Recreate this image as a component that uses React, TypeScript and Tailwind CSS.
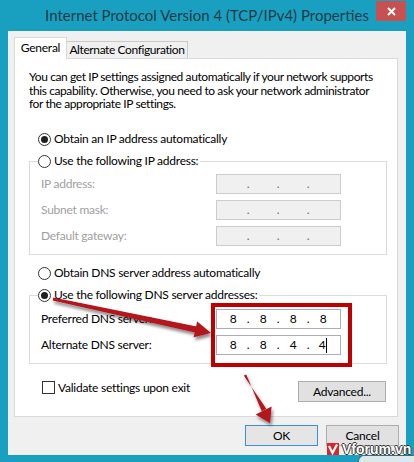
import React from "react";

const Radio = ({ checked }: { checked?: boolean }) => (
    <span className="w-[13px] h-[13px] rounded-full border border-[#333333] bg-white flex items-center justify-center shrink-0">
        {checked && <span className="w-[7px] h-[7px] rounded-full bg-[#1f1f1f]" />}
    </span>
);

const IpBox = ({ values, disabled, cursor }: { values: string[]; disabled?: boolean; cursor?: boolean }) => (
    <div
        className={
            disabled
                ? "w-[125px] h-[20px] border border-[#cccccc] bg-[#f0f0f0] flex items-center pl-[3px] text-[#6d6d6d]"
                : "w-[125px] h-[20px] border border-[#abadb3] bg-white flex items-center pl-[3px] text-black"
        }
    >
        {values.map((v, i) => (
            <React.Fragment key={i}>
                <span className="w-[26px] flex justify-center items-center">
                    {v}
                    {cursor && i === 3 && <span className="w-px h-[15px] bg-black ml-[1px]" />}
                </span>
                {i < 3 && <span className="w-[4px] flex justify-center">.</span>}
            </React.Fragment>
        ))}
    </div>
);

const Row = ({ label, children, disabled }: { label: string; children: React.ReactNode; disabled?: boolean }) => (
    <div className="flex items-center h-[20px]">
        <span className={disabled ? "w-[175px] text-[#a0a0a0]" : "w-[175px] text-black"}>{label}</span>
        {children}
    </div>
);

export default function App() {
    return (
        <div className="relative w-[414px] h-[462px] bg-[#19a0c1] overflow-hidden font-['Lato',sans-serif] text-[12px] leading-[16px] tracking-[-0.25px] text-black whitespace-nowrap">
            {/* title bar */}
            <div className="relative h-[31px] flex items-center justify-center">
                <span className="text-[15px] tracking-normal text-[#1f3b45] leading-[20px] -mt-[1px]">
                    Internet Protocol Version 4 (TCP/IPv4) Properties
                </span>
                <div className="absolute top-[1px] right-[8px] w-[30px] h-[20px] bg-[#c75050] flex items-center justify-center">
                    <svg width="9" height="9" viewBox="0 0 9 9">
                        <path d="M1 1 L8 8 M8 1 L1 8" stroke="white" strokeWidth="2" />
                    </svg>
                </div>
            </div>

            {/* client area */}
            <div className="ml-[8px] w-[398px] h-[424px] bg-[#f0f0f0] flex flex-col pl-[6px] pr-[7px] pt-[6px]">
                {/* tabs */}
                <div className="flex items-end h-[22px] -mb-px relative z-10">
                    <div className="h-[22px] w-[53px] bg-white border-t border-x border-[#d9d9d9] flex items-center justify-center pb-[1px]">
                        General
                    </div>
                    <div className="h-[17px] w-[121px] mb-px bg-[#f0f0f0] border-t border-r border-[#c9c9c9] flex items-center justify-center tracking-[-0.4px]">
                        Alternate Configuration
                    </div>
                </div>

                {/* panel */}
                <div className="w-[384px] h-[359px] bg-white border border-[#d9d9d9] flex flex-col pl-[14px] pr-[10px] pt-[11px]">
                    <p className="leading-[13.5px] tracking-[-0.4px]">
                        You can get IP settings assigned automatically if your network supports
                        <br />
                        this capability. Otherwise, you need to ask your network administrator
                        <br />
                        for the appropriate IP settings.
                    </p>

                    <div className="mt-[20.5px] h-[16px] flex items-center gap-[3px] ml-[9px]">
                        <Radio checked />
                        <span>Obtain an IP address automatically</span>
                    </div>

                    <fieldset className="mt-[6px] w-[358px] border border-[#dcdcdc] pl-[8px] pb-[8px]">
                        <legend className="h-[16px] flex items-center gap-[3px] pr-[2px]">
                            <Radio />
                            <span>Use the following IP address:</span>
                        </legend>
                        <div className="flex flex-col gap-[6px] mt-[5px] pl-[3px]">
                            <Row label="IP address:" disabled>
                                <IpBox values={["", "", "", ""]} disabled />
                            </Row>
                            <Row label="Subnet mask:" disabled>
                                <IpBox values={["", "", "", ""]} disabled />
                            </Row>
                            <Row label="Default gateway:" disabled>
                                <IpBox values={["", "", "", ""]} disabled />
                            </Row>
                        </div>
                    </fieldset>

                    <div className="mt-[10px] h-[16px] flex items-center gap-[3px] ml-[9px]">
                        <Radio />
                        <span>Obtain DNS server address automatically</span>
                    </div>

                    <fieldset className="mt-[6px] w-[358px] border border-[#dcdcdc] pl-[8px] pb-[8px]">
                        <legend className="h-[16px] flex items-center gap-[3px] pr-[2px]">
                            <Radio checked />
                            <span>Use the following DNS server addresses:</span>
                        </legend>
                        <div className="flex flex-col gap-[6px] mt-[6px] pl-[3px]">
                            <Row label="Preferred DNS server:">
                                <IpBox values={["8", "8", "8", "8"]} />
                            </Row>
                            <Row label="Alternate DNS server:">
                                <IpBox values={["8", "8", "4", "4"]} cursor />
                            </Row>
                        </div>
                    </fieldset>

                    <div className="mt-[17px] flex items-start">
                        <div className="ml-[13px] flex items-center gap-[3px] h-[13px]">
                            <span className="w-[13px] h-[13px] border border-[#333333] bg-white" />
                            <span>Validate settings upon exit</span>
                        </div>
                        <button className="ml-auto mr-[1px] w-[88px] h-[21px] bg-[#e1e1e1] border border-[#adadad] flex items-center justify-center">
                            Advanced...
                        </button>
                    </div>
                </div>

                {/* dialog buttons */}
                <div className="mt-[8px] flex justify-end gap-[8px]">
                    <button className="w-[73px] h-[21px] bg-[#e5e5e5] border border-[#3c8fd8] flex items-center justify-center">
                        OK
                    </button>
                    <button className="w-[73px] h-[21px] bg-[#e1e1e1] border border-[#adadad] flex items-center justify-center">
                        Cancel
                    </button>
                </div>
            </div>

            {/* annotation: red frame round the DNS boxes */}
            <div className="absolute left-[211px] top-[303px] w-[141px] h-[64px] border-[4px] border-[#c00000]" />

            {/* annotation arrows */}
            <svg className="absolute inset-0 pointer-events-none" width="414" height="462" viewBox="0 0 414 462">
                <defs>
                    <filter id="sh" x="-20%" y="-20%" width="140%" height="140%">
                        <feDropShadow dx="1.5" dy="3" stdDeviation="1.5" floodColor="#000" floodOpacity="0.45" />
                    </filter>
                </defs>
                <g filter="url(#sh)" fill="#b5121b">
                    <polygon points="53.3,297.5 196.7,326.6 195.3,332.4 52.7,300.5" />
                    <polygon points="211,333 197.2,321.6 193.6,337.2" />
                    <polygon points="243.8,375.4 266.2,408.8 261.8,411.2 246.2,374.6" />
                    <polygon points="270,423 271.6,406.4 255.6,414.6" />
                </g>
            </svg>

            {/* watermark */}
            <div className="absolute left-[327px] top-[442px] flex items-center gap-[3px] tracking-normal">
                <svg width="12" height="12" viewBox="0 0 12 12">
                    <rect width="12" height="12" fill="#d9252b" />
                    <path d="M2 3 L5.5 10 L10 1.5" stroke="white" strokeWidth="2.2" fill="none" />
                </svg>
                <span className="font-['Liberation_Sans',sans-serif] font-bold text-[14px] leading-[14px] text-white [text-shadow:1px_0_#333,-1px_0_#333,0_1px_#333,0_-1px_#333]">
                    Vforum.vn
                </span>
            </div>
            <div className="absolute left-[358px] top-[455px] w-[60px] h-[10px] bg-[#dde8ea] border-t border-l border-[#2e6f80] rounded-tl-[6px]" />
        </div>
    );
}
